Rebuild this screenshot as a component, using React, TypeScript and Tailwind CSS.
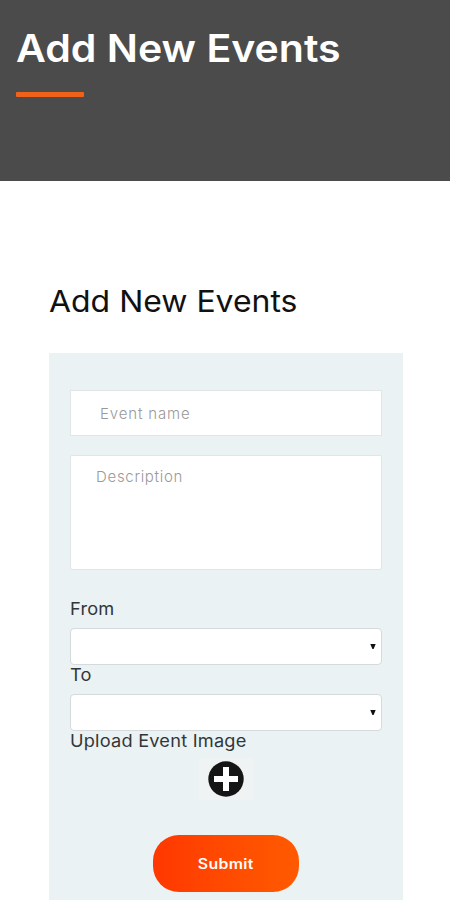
import type { ReactNode } from "react";

function Label({ children }: { children: ReactNode }) {
    return (
        <label className="block h-[30px] w-fit origin-left scale-x-[1.07] text-[17px] leading-[22px] tracking-[0.2px] whitespace-nowrap text-[#333638]">
            {children}
        </label>
    );
}

function DateSelect() {
    return (
        <div className="flex h-[37px] items-center justify-end rounded-[4px] border border-[#d5dadc] bg-white pr-[5px]">
            <svg width="6" height="6" viewBox="0 0 6 6" fill="#111">
                <path d="M0.3 0h5.4L3.6 5H2.4z" />
            </svg>
        </div>
    );
}

export default function App() {
    return (
        <main className="h-[900px] w-full overflow-hidden bg-white font-['Inter',sans-serif]">
            <header className="h-[181px] bg-[#4b4b4b] pt-6 pl-4">
                <h1 className="w-fit origin-left scale-x-[1.08] text-[38px] leading-[48px] font-semibold whitespace-nowrap text-white">
                    Add New Events
                </h1>
                <div className="mt-5 h-[5px] w-[68px] rounded-[1px] bg-[#f0621a]" />
            </header>

            <section className="mr-[47px] ml-[49px] pt-[100px]">
                <h2 className="w-fit origin-left scale-x-[1.065] text-[30px] leading-10 font-normal whitespace-nowrap text-[#111]">
                    Add New Events
                </h2>

                <form className="mt-8 flex h-[560px] flex-col bg-[#eaf2f4] px-[21px] pt-[37px]">
                    <input
                        type="text"
                        placeholder="Event name"
                        className="h-[46px] w-full shrink-0 border border-[#e1e5e7] bg-white pl-[29px] text-[15px] font-light tracking-[0.85px] placeholder:text-[#999] placeholder:opacity-100"
                    />
                    <textarea
                        placeholder="Description"
                        className="mt-[19px] block h-[115px] w-full shrink-0 resize-none rounded-[2px] border border-[#e1e5e7] bg-white pt-[10px] pl-[25px] text-[15px] leading-[22px] font-light tracking-[0.7px] placeholder:text-[#999] placeholder:opacity-100"
                    />

                    <div className="mt-7">
                        <Label>From</Label>
                        <DateSelect />
                    </div>
                    <div className="-mt-px">
                        <Label>To</Label>
                        <DateSelect />
                    </div>
                    <div className="-mt-px">
                        <Label>Upload Event Image</Label>
                    </div>

                    <div className="-mt-[2px] flex h-[42px] w-[54px] shrink-0 items-center justify-center self-center bg-[#eff3f4]">
                        <svg width="36" height="36" viewBox="0 0 36 36">
                            <circle cx="18" cy="18" r="17.7" fill="#151515" />
                            <path d="M15 6h6v9h9v6h-9v9h-6v-9H6v-6h9z" fill="#fff" />
                        </svg>
                    </div>

                    <button
                        type="button"
                        className="mt-[35px] h-[57px] w-[146px] shrink-0 self-center rounded-[26px] bg-linear-to-r from-[#ff3700] to-[#ff5a00] text-[14px] font-semibold tracking-[0.3px] text-white"
                    >
                        <span className="inline-block scale-x-[1.13]">Submit</span>
                    </button>
                </form>
            </section>
        </main>
    );
}
